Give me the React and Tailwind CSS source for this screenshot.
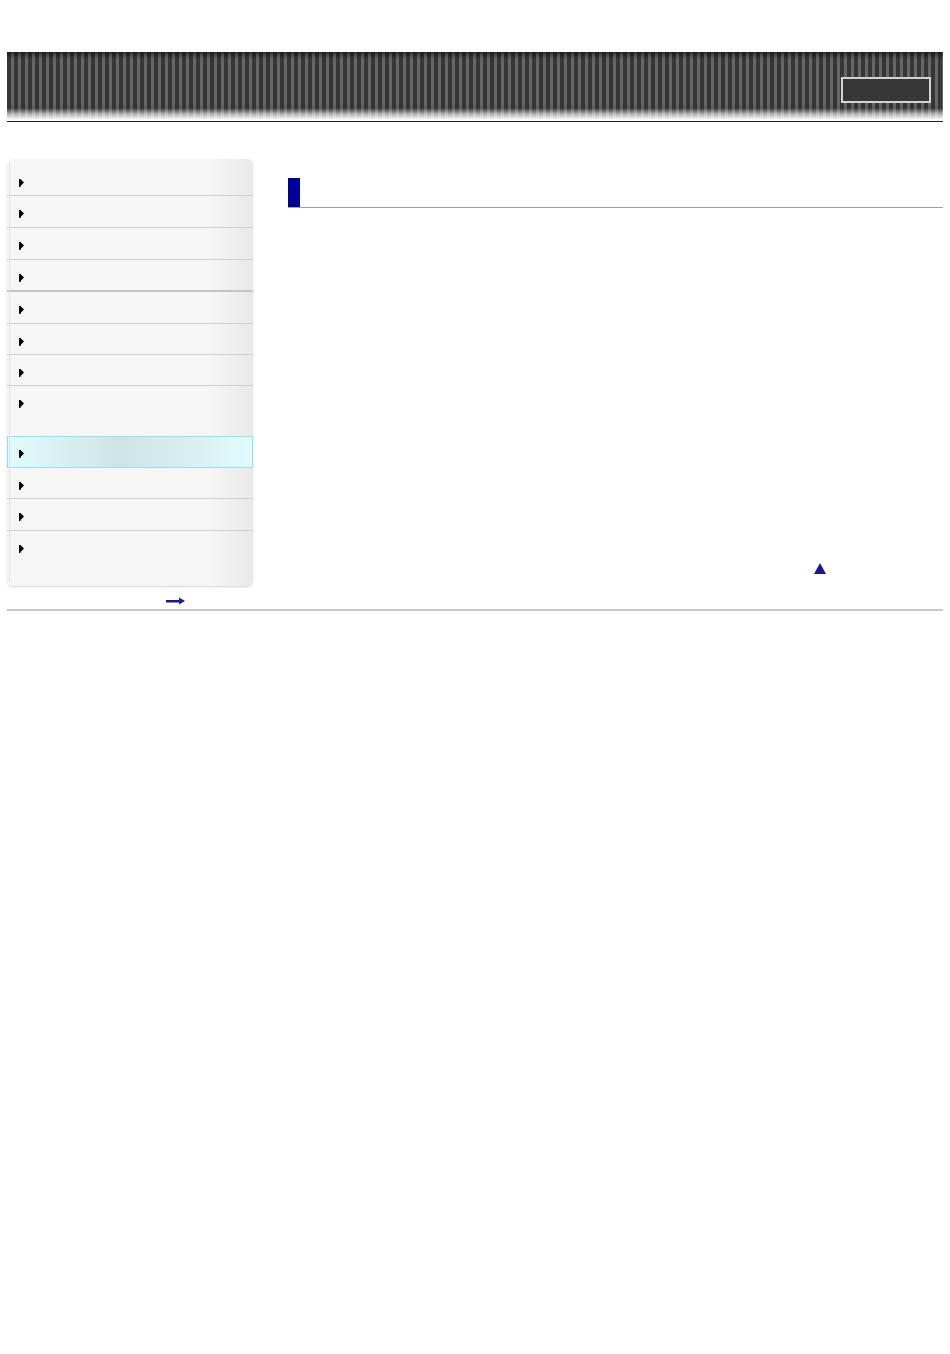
import React from "react";

const Bullet = () => (
  <svg width="5" height="8" viewBox="0 0 5 8" className="block">
    <polygon points="0,0 1.5,0 5,3.5 1.5,7 1.5,8 0,8" fill="#000" />
  </svg>
);

const rows = [
  { h: "h-[31px]", border: "border-b border-[#cfcfcf]" },
  { h: "h-[32px]", border: "border-b border-[#cfcfcf]" },
  { h: "h-[32px]", border: "border-b border-[#cfcfcf]" },
  { h: "h-[32px]", border: "border-b-2 border-[#c4c4c4]" },
  { h: "h-[32px]", border: "border-b border-[#cfcfcf]" },
  { h: "h-[31px]", border: "border-b border-[#cfcfcf]" },
  { h: "h-[31px]", border: "border-b border-[#cfcfcf]" },
  { h: "h-[50px]", border: "" },
  { h: "h-[32px]", active: true },
  { h: "h-[31px]", border: "border-b border-[#cfcfcf]" },
  { h: "h-[32px]", border: "border-b border-[#cfcfcf]" },
  { h: "h-[55px]", border: "" },
];

export default function App() {
  return (
    <div className="w-[950px] min-h-[1354px] bg-white font-['Liberation_Sans',Arial,sans-serif]">
      <div className="h-[52px]" />

      {/* HEADER */}
      <div className="mx-[7px] h-[70px] border-b border-[#222] bg-[linear-gradient(180deg,rgba(0,0,0,0.55)_0px,rgba(0,0,0,0.2)_4px,rgba(0,0,0,0)_8px,rgba(0,0,0,0)_52px,rgba(40,40,40,0.2)_56px,rgba(255,255,255,0.6)_62px,rgba(255,255,255,1)_68px),repeating-linear-gradient(90deg,#363636_0px,#363636_4px,#676767_4px,#676767_7px)] flex justify-end items-start pt-[25px] pr-[12px]">
        <div className="w-[90px] h-[26px] bg-[#363636] border-2 border-[#d4d4d4]" />
      </div>

      <div className="flex mt-[37px]">
        {/* SIDEBAR */}
        <div className="ml-[7px] w-[246px] shrink-0">
          <div className="relative rounded-[6px] bg-[linear-gradient(90deg,#f6f6f6_0%,#f6f6f6_82%,#e9e9e9_100%)] shadow-[0_1px_2px_rgba(0,0,0,0.18)] pt-[6px] overflow-hidden">
            <div className="absolute left-[2px] top-[4px] bottom-[4px] w-[1px] bg-[#e2e2e2]" />
            {rows.map((r, i) => (
              <div
                key={i}
                className={
                  r.active
                    ? `${r.h} border border-[#8fe1f7] bg-[linear-gradient(90deg,#e1fbfd_0%,#cfe4e7_45%,#d8eef0_75%,#e1fcfd_100%)] pl-[11px] pt-[13px]`
                    : `${r.h} ${r.border} pl-[12px] pt-[14px]`
                }
              >
                <Bullet />
              </div>
            ))}
          </div>
          <div className="pl-[159px] pt-[11px] h-[23px]">
            <svg width="20" height="8" viewBox="0 0 20 8" className="block">
              <rect x="0" y="3" width="15" height="2.5" fill="#1a1a8c" />
              <polygon points="13,0.5 19,4 13,7.5" fill="#1a1a8c" />
            </svg>
          </div>
        </div>

        {/* MAIN */}
        <div className="ml-[35px] flex-1 mr-[7px] pt-[19px] flex flex-col">
          <div className="border-b border-[#a0a0a0] h-[30px]">
            <div className="w-[12px] h-[29px] bg-[#000099]" />
          </div>
          <div className="mt-[355px] ml-[526px]">
            <svg width="12" height="11" viewBox="0 0 12 11" className="block">
              <polygon points="6,0 12,11 0,11" fill="#1a1a8c" />
            </svg>
          </div>
        </div>
      </div>

      <div className="mx-[7px] h-[2px] bg-[#c8c8c8]" />
    </div>
  );
}
